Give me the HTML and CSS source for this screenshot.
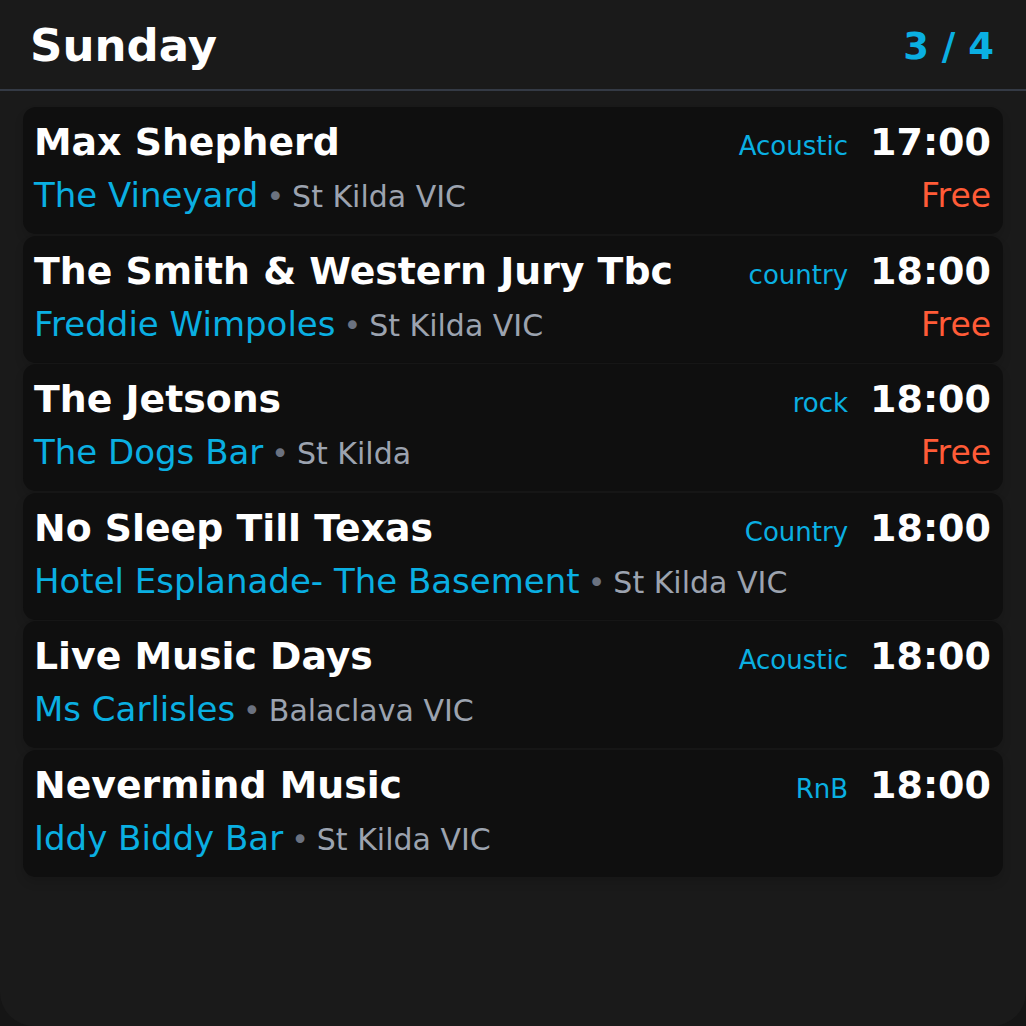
FILE: index.html
```html
<!DOCTYPE html>
<html lang="en">
<head>
<meta charset="utf-8">
<title>Sunday gigs</title>
<link rel="stylesheet" href="styles.css">
</head>
<body>
<div class="screen">
  <header class="header">
    <h1 class="day">Sunday</h1>
    <div class="page">3 / 4</div>
  </header>
  <ul class="list">
    <li class="card">
      <div class="row top"><span class="title">Max Shepherd</span><span class="genre">Acoustic</span><span class="time">17:00</span></div>
      <div class="row bottom"><span class="venue">The Vineyard</span><span class="loc"><span class="dot">•</span>St Kilda VIC</span><span class="price">Free</span></div>
    </li>
    <li class="card">
      <div class="row top"><span class="title">The Smith &amp; Western Jury Tbc</span><span class="genre">country</span><span class="time">18:00</span></div>
      <div class="row bottom"><span class="venue">Freddie Wimpoles</span><span class="loc"><span class="dot">•</span>St Kilda VIC</span><span class="price">Free</span></div>
    </li>
    <li class="card">
      <div class="row top"><span class="title">The Jetsons</span><span class="genre">rock</span><span class="time">18:00</span></div>
      <div class="row bottom"><span class="venue">The Dogs Bar</span><span class="loc"><span class="dot">•</span>St Kilda</span><span class="price">Free</span></div>
    </li>
    <li class="card">
      <div class="row top"><span class="title">No Sleep Till Texas</span><span class="genre">Country</span><span class="time">18:00</span></div>
      <div class="row bottom"><span class="venue">Hotel Esplanade- The Basement</span><span class="loc"><span class="dot">•</span>St Kilda VIC</span></div>
    </li>
    <li class="card">
      <div class="row top"><span class="title">Live Music Days</span><span class="genre">Acoustic</span><span class="time">18:00</span></div>
      <div class="row bottom"><span class="venue">Ms Carlisles</span><span class="loc"><span class="dot">•</span>Balaclava VIC</span></div>
    </li>
    <li class="card">
      <div class="row top"><span class="title">Nevermind Music</span><span class="genre">RnB</span><span class="time">18:00</span></div>
      <div class="row bottom"><span class="venue">Iddy Biddy Bar</span><span class="loc"><span class="dot">•</span>St Kilda VIC</span></div>
    </li>
  </ul>
</div>
</body>
</html>
```

FILE: styles.css
```css
* { box-sizing: border-box; }
html, body {
  margin: 0;
  padding: 0;
  background: #151515;
}
body {
  font-family: "DejaVu Sans", "Liberation Sans", sans-serif;
  color: #ffffff;
}
.screen {
  width: 1026px;
  height: 1026px;
  background: #1a1a1a;
  border-radius: 0 0 34px 34px;
  overflow: hidden;
}
.header {
  height: 91px;
  padding: 3px 32px 0 30px;
  display: flex;
  align-items: center;
  justify-content: space-between;
  border-bottom: 2px solid #343a45;
}
.day {
  margin: 0;
  font-size: 45px;
  font-weight: bold;
  line-height: 52px;
}
.page {
  font-size: 37px;
  font-weight: bold;
  color: #0aafe2;
  line-height: 43px;
}
.list {
  list-style: none;
  margin: 0;
  padding: 16px 23px 0;
  display: flex;
  flex-direction: column;
  gap: 1.5px;
}
.card {
  height: 127px;
  background: #0f0f0f;
  border-radius: 13px;
  padding: 13px 12px 0 11px;
  box-shadow: 0 6px 10px rgba(0, 0, 0, 0.12);
}
.row {
  display: flex;
  align-items: baseline;
  white-space: nowrap;
}
.top {
  height: 44px;
}
.bottom {
  margin-top: 11px;
}
.title {
  flex: 1;
  font-size: 37.8px;
  font-weight: bold;
  line-height: 44px;
}
.genre {
  font-size: 26px;
  color: #0aafe2;
  margin-right: 22px;
}
.time {
  font-size: 38px;
  font-weight: bold;
  line-height: 44px;
}
.venue {
  font-size: 34px;
  color: #0aafe2;
}
.loc {
  font-size: 30px;
  color: #9ca3af;
  flex: 1;
}
.dot {
  color: #6b7280;
  margin: 0 8px 0 8px;
}
.price {
  font-size: 33px;
  color: #ff5b37;
}
```
